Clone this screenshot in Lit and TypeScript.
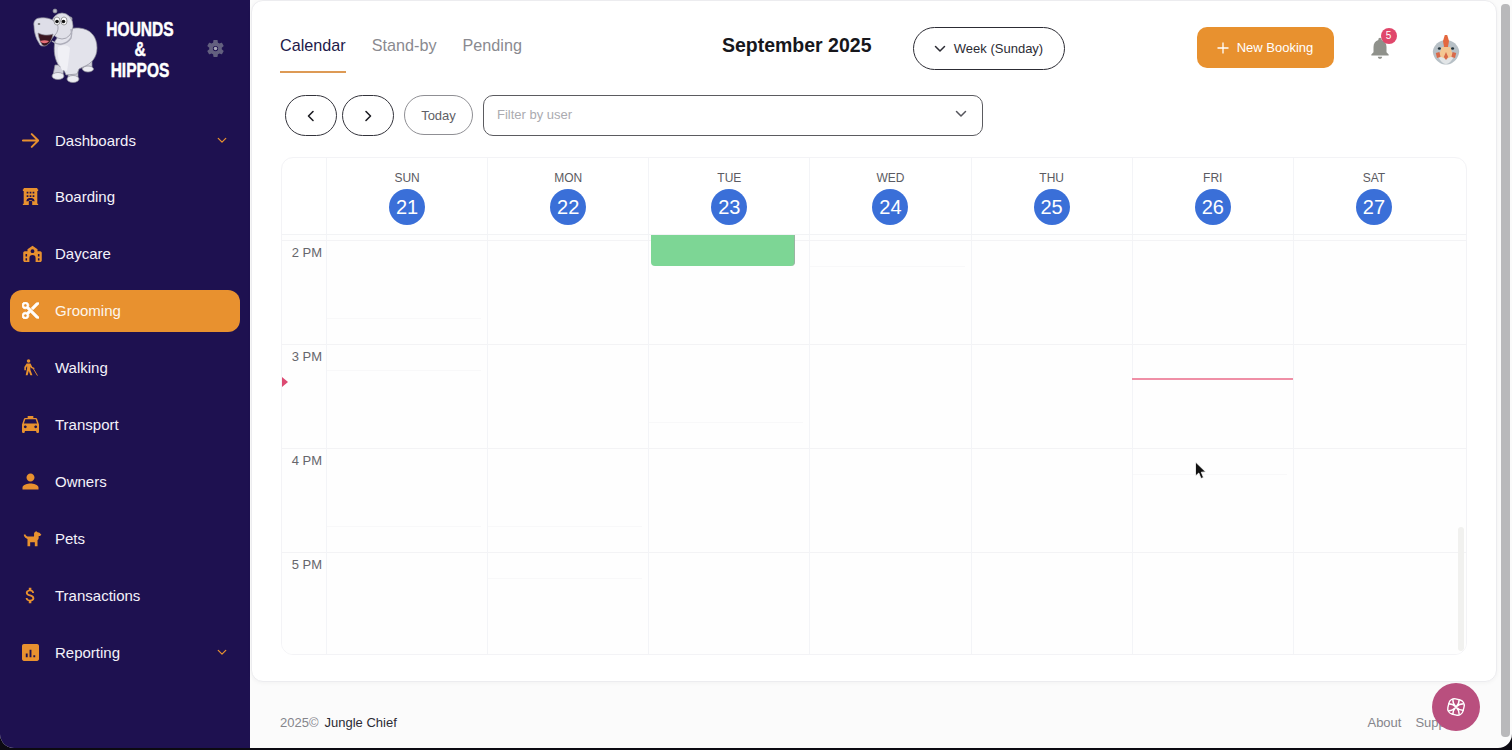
import { LitElement, html, css } from "lit";
import { customElement } from "lit/decorators.js";

const icons: Record<string, unknown> = {
  arrow: html`<svg class="ic" viewBox="2 3 20 18" fill="none" stroke="currentColor" stroke-width="2.300" stroke-linecap="round" stroke-linejoin="round"><path d="M3 12h18M13.500 4.500 21 12l-7.500 7.500"/></svg>`,
  hotel: html`<svg class="ic" viewBox="3 2 18 20" fill="currentColor"><path fill-rule="evenodd" d="M4 2h16v1.500h1v2h-1v15h1V22h-7v-3.500c0-1-.8-1.500-1-1.500h-2c-.2 0-1 .5-1 1.500V22H3v-1.500h1v-15H3v-2h1V2zm3.500 4.500v2h2v-2h-2zm3.500 0v2h2v-2h-2zm3.500 0v2h2v-2h-2zm-7 4v2h2v-2h-2zm3.500 0v2h2v-2h-2zm3.500 0v2h2v-2h-2zM8 15c1-1.800 7-1.800 8 0l1 2.500h-2.500c-1-1.800-4-1.800-5 0H7L8 15z"/></svg>`,
  school: html`<svg class="ic wide" viewBox="0 0 24 22" fill="currentColor"><path fill-rule="evenodd" d="M12 1l6.500 4.500V8H22c1 0 2 1 2 2v10c0 1-1 2-2 2h-6v-5a4 4 0 0 0-8 0v5H2c-1 0-2-1-2-2V10c0-1 1-2 2-2h3.500V5.500L12 1zm0 4.500a2.500 2.500 0 1 0 0 5 2.500 2.500 0 0 0 0-5zM3 11.500V15h2v-3.500H3zm16 0V15h2v-3.500h-2zM3 17v3h2v-3H3zm16 0v3h2v-3h-2z"/></svg>`,
  cut: html`<svg class="ic" viewBox="2 2 20 20" fill="currentColor" stroke="currentColor" stroke-width="1"><path d="M9.640 7.640c.23-.5.36-1.050.36-1.640 0-2.210-1.790-4-4-4S2 3.790 2 6s1.790 4 4 4c.59 0 1.140-.13 1.640-.36L10 12l-2.360 2.360C7.140 14.130 6.590 14 6 14c-2.210 0-4 1.790-4 4s1.790 4 4 4 4-1.790 4-4c0-.59-.13-1.140-.36-1.640L12 14l7 7h3v-1L9.640 7.640zM6 8c-1.100 0-2-.89-2-2s.9-2 2-2 2 .89 2 2-.9 2-2 2zm0 12c-1.100 0-2-.89-2-2s.9-2 2-2 2 .89 2 2-.9 2-2 2zM19 3l-6 6 2 2 7-7V3z"/></svg>`,
  walk: html`<svg class="ic" viewBox="3 1 19 22" fill="currentColor"><circle cx="10" cy="3.500" r="2.300"/><path d="M7.500 6.800h5l2.300 4.500 3 1.200-.7 1.700-3.800-1.500-1-1.800V15l2.700 7h-2.600l-2.200-5.500L8.800 22H6.300l1.800-9v-3L6.600 12.500v3H4.500v-4l3-4.700z"/><path d="M16.200 13.500 21.500 22.500" stroke="currentColor" stroke-width="1.200" fill="none"/></svg>`,
  taxi: html`<svg class="ic" viewBox="3 3 18 18" fill="currentColor"><path d="M18.920 6.010C18.720 5.420 18.160 5 17.500 5H15V3H9v2H6.500c-.66 0-1.210.42-1.420 1.010L3 12v8c0 .55.45 1 1 1h1c.55 0 1-.45 1-1v-1h12v1c0 .55.45 1 1 1h1c.55 0 1-.45 1-1v-8l-2.080-5.990zM6.500 16c-.83 0-1.500-.67-1.500-1.500S5.670 13 6.500 13s1.500.67 1.500 1.500S7.330 16 6.500 16zm11 0c-.83 0-1.500-.67-1.500-1.500s.67-1.500 1.500-1.500 1.500.67 1.500 1.500-.67 1.500-1.500 1.500zM5 11l1.500-4.500h11L19 11H5z"/></svg>`,
  person: html`<svg class="ic" viewBox="4 3.500 16 17" fill="currentColor"><path d="M12 12c2.210 0 4-1.790 4-4s-1.790-4-4-4-4 1.790-4 4 1.790 4 4 4zm0 2c-2.670 0-8 1.340-8 4v2h16v-2c0-2.660-5.330-4-8-4z"/></svg>`,
  dog: html`<svg class="ic wide" viewBox="0 0 24 22" fill="currentColor"><path d="M14 4.500c.5-1.800 1.800-3 3-3l1.500 1.300 2.500.7 2.500 2.500-1.800 1.800H20v2.200c0 1.500-.6 2.500-1.500 3.300V21H15v-5H9v5H5.500v-9.500C3 11 1.300 9 .6 6.200l2-.7C3.300 7.500 5 8.500 7 8.500h7V4.500z"/></svg>`,
  dollar: html`<svg class="ic" viewBox="4.500 2 15 20" fill="currentColor"><path d="M11.800 10.900c-2.270-.59-3-1.200-3-2.150 0-1.090 1.010-1.850 2.700-1.850 1.780 0 2.440.85 2.500 2.100h2.210c-.07-1.720-1.120-3.300-3.210-3.810V3h-3v2.160c-1.940.42-3.500 1.680-3.500 3.610 0 2.310 1.910 3.460 4.700 4.130 2.500.6 3 1.480 3 2.410 0 .69-.49 1.790-2.700 1.790-2.060 0-2.870-.92-2.980-2.100h-2.200c.12 2.190 1.760 3.420 3.680 3.830V21h3v-2.150c1.950-.37 3.500-1.500 3.500-3.550 0-2.840-2.430-3.810-4.700-4.400z"/></svg>`,
  chart: html`<svg class="ic" viewBox="3 3 18 18" fill="currentColor"><path d="M19 3H5c-1.100 0-2 .9-2 2v14c0 1.100.9 2 2 2h14c1.100 0 2-.9 2-2V5c0-1.100-.9-2-2-2zM9 17H7v-4h2v4zm4 0h-2V9h2v8zm4 0h-2v-2h2v2z"/></svg>`,
};

const chevron = (cls: string) =>
  html`<svg class=${cls} viewBox="0 0 12 8" fill="none" stroke="currentColor" stroke-width="1.500" stroke-linecap="round" stroke-linejoin="round"><path d="M1.500 1.500 6 6l4.500-4.500"/></svg>`;

const nav = [
  { label: "Dashboards", icon: "arrow", more: true },
  { label: "Boarding", icon: "hotel" },
  { label: "Daycare", icon: "school" },
  { label: "Grooming", icon: "cut", active: true },
  { label: "Walking", icon: "walk" },
  { label: "Transport", icon: "taxi" },
  { label: "Owners", icon: "person" },
  { label: "Pets", icon: "dog" },
  { label: "Transactions", icon: "dollar" },
  { label: "Reporting", icon: "chart", more: true },
];

const days = [
  ["SUN", 21],
  ["MON", 22],
  ["TUE", 23],
  ["WED", 24],
  ["THU", 25],
  ["FRI", 26],
  ["SAT", 27],
];
const hours = ["2 PM", "3 PM", "4 PM", "5 PM"];
// day:hour:slot combinations where a faint slot rule shows in the frame
const lined = new Set(["3:0:0", "0:0:2", "0:1:0", "2:1:2", "5:2:0", "0:2:2", "1:2:2", "1:3:0"]);

@customElement("app-root")
export class AppRoot extends LitElement {
  static styles = css`
    :host {
      display: block;
      height: 750px;
      overflow: hidden;
      background: #0c0a12;
      font-family: "Liberation Sans", Arial, sans-serif;
      position: relative;
    }
    .shell {
      display: flex;
      height: 748px;
      border-radius: 0 0 14px 14px;
      overflow: hidden;
      background: #fbfbfb;
    }
    aside {
      width: 250px;
      flex: none;
      background: #1e1150;
      color: #f4f2fa;
    }
    .brand {
      height: 119px;
      box-sizing: border-box;
      padding: 5px 0 0 25px;
      display: flex;
      align-items: flex-start;
    }
    .hippo {
      width: 80px;
      height: 80px;
      flex: none;
    }
    .wordmark {
      width: 70px;
      margin-top: 14px;
      text-align: center;
      color: #fff;
      font-size: 21px;
      font-weight: 700;
      line-height: 20.300px;
      transform: scaleX(0.74);
      white-space: nowrap;
      display: flex;
      flex-direction: column;
      align-items: center;
      -webkit-text-stroke: 0.500px #fff;
    }
    .gear {
      width: 21px;
      height: 21px;
      margin: 33px 0 0 30px;
      color: #63607f;
      flex: none;
    }
    .navlist {
      display: flex;
      flex-direction: column;
      gap: 14.900px;
      padding: 0 10px;
    }
    .item {
      display: flex;
      align-items: center;
      height: 42px;
      border-radius: 12px;
      padding: 0 12px;
      font-size: 15px;
    }
    .item.active {
      background: #e8912f;
      color: #fdf6ec;
    }
    .slot {
      width: 18px;
      display: flex;
      justify-content: flex-start;
      color: #e8912f;
      margin-right: 15px;
    }
    .item.active .slot {
      color: #fff;
    }
    .ic {
      width: 17px;
      height: 17px;
      flex: none;
      display: block;
    }
    .ic.wide {
      width: 21px;
    }
    .more {
      width: 10px;
      height: 7px;
      margin-left: auto;
      margin-right: 1px;
      color: #e8912f;
    }
    main {
      flex: 1;
      min-width: 0;
      display: flex;
      flex-direction: column;
      margin-left: 1px;
    }
    .card {
      height: 682px;
      box-sizing: border-box;
      background: #fff;
      border: 1px solid #ececef;
      border-radius: 12px;
      box-shadow: 0 1px 4px rgba(0, 0, 0, 0.04);
      padding: 0 29px 0 28px;
    }
    .top {
      display: flex;
      align-items: flex-start;
      height: 72px;
    }
    .tabs {
      display: flex;
      gap: 26px;
    }
    .tab {
      height: 72px;
      box-sizing: border-box;
      padding-top: 34px;
      line-height: 20px;
      font-size: 16.200px;
      color: #8a8a90;
    }
    .tab.on {
      color: #1e1a4a;
      border-bottom: 2px solid #dd9a55;
    }
    h1 {
      margin: 33px 0 0 200px;
      font-size: 19.500px;
      line-height: 23px;
      color: #17171c;
      font-weight: 700;
    }
    .week {
      margin: 26px 0 0 41px;
      width: 152px;
      height: 43px;
      box-sizing: border-box;
      border: 1.300px solid #2c2c34;
      border-radius: 22px;
      display: flex;
      align-items: center;
      justify-content: center;
      gap: 8px;
      font-size: 13px;
      color: #2c2c34;
    }
    .week svg {
      width: 12px;
      height: 8px;
    }
    .book {
      margin: 26px 0 0 132px;
      width: 137px;
      height: 41px;
      box-sizing: border-box;
      border-radius: 10px;
      background: #e8912f;
      color: #fff;
      font-size: 13px;
      display: flex;
      align-items: center;
      justify-content: center;
      gap: 8px;
    }
    .book svg {
      width: 12px;
      height: 12px;
    }
    .bell {
      position: relative;
      margin: 34px 0 0 33px;
      width: 24px;
      height: 26px;
      color: #8f918b;
      flex: none;
    }
    .bell svg {
      width: 26px;
      height: 26px;
      display: block;
    }
    .badge {
      position: absolute;
      top: -7px;
      right: -6px;
      width: 16px;
      height: 16px;
      border-radius: 50%;
      background: #e0476b;
      color: #fff;
      font-size: 10px;
      line-height: 16px;
      text-align: center;
    }
    .avatar {
      width: 36px;
      height: 32px;
      margin: 33px 0 0 37px;
      flex: none;
    }
    .tools {
      display: flex;
      align-items: flex-start;
      margin: 22px 0 0 5px;
      height: 41px;
    }
    .round {
      width: 52px;
      height: 41px;
      box-sizing: border-box;
      border: 1.300px solid #33333b;
      border-radius: 21px;
      display: flex;
      align-items: center;
      justify-content: center;
      margin-right: 5px;
      color: #1e1e24;
    }
    .round svg {
      width: 8px;
      height: 12px;
    }
    .today {
      margin: 0 10px 0 5px;
      width: 69px;
      height: 40px;
      box-sizing: border-box;
      border: 1px solid #8f8f94;
      border-radius: 20px;
      font-size: 13px;
      color: #5f5f66;
      display: flex;
      align-items: center;
      justify-content: center;
    }
    .filter {
      width: 500px;
      height: 41px;
      box-sizing: border-box;
      border: 1.500px solid #5b5b60;
      border-radius: 10px;
      padding: 0 15px 3px 13px;
      display: flex;
      align-items: center;
      justify-content: space-between;
      font-size: 13px;
      color: #ababb0;
    }
    .filter svg {
      width: 12px;
      height: 8px;
      color: #55555c;
    }
    .cal {
      margin: 21px 0 0 1px;
      width: 1186px;
      height: 498px;
      box-sizing: border-box;
      border: 1px solid #f3f3f6;
      border-radius: 12px;
      overflow: hidden;
      display: flex;
      flex-direction: column;
      background: #fff;
    }
    .cols {
      display: grid;
      grid-template-columns: 44px repeat(7, 1fr);
      padding-right: 12px;
    }
    .head {
      height: 77px;
      flex: none;
      box-sizing: border-box;
      border-bottom: 1px solid #f2f3f5;
    }
    .dh {
      border-left: 1px solid #f3f4f7;
      padding-top: 13px;
      display: flex;
      flex-direction: column;
      align-items: center;
      gap: 4px;
      font-size: 12px;
      line-height: 14px;
      color: #5b5b62;
    }
    .num {
      width: 36px;
      height: 36px;
      border-radius: 50%;
      background: #3a6fd8;
      color: #fff;
      font-size: 20px;
      line-height: 36px;
      text-align: center;
    }
    .body {
      position: relative;
      flex: 1;
      overflow: hidden;
      background: #fefefe;
    }
    .stub {
      height: 5px;
    }
    .stub > div {
      border-left: 1px solid #f3f4f7;
    }
    .stub > div:first-child {
      border-left: none;
    }
    .hour {
      height: 104px;
      border-top: 1px solid #f3f3f5;
      box-sizing: border-box;
    }
    .time {
      font-size: 13px;
      line-height: 15px;
      color: #66666c;
      text-align: right;
      padding: 4px 4px 0 0;
      box-sizing: border-box;
      position: relative;
      height: 100%;
    }
    .daycell {
      border-left: 1px solid #f3f4f7;
      display: grid;
      grid-template-rows: repeat(4, 26px);
    }
    .rule {
      margin-right: 6px;
      border-bottom: 1px solid transparent;
    }
    .rule.show {
      border-bottom-color: #f8f8f9;
    }
    .event {
      position: absolute;
      left: 369px;
      top: 0;
      width: 144px;
      height: 31px;
      background: #7dd695;
      border-radius: 0 0 4px 4px;
      border-right: 1px solid #9ab5a2;
      box-sizing: border-box;
    }
    .nowline {
      position: absolute;
      left: 850px;
      top: 143px;
      width: 161px;
      height: 2px;
      background: #ef8fa6;
    }
    .nowmark {
      position: absolute;
      left: 0;
      top: 142px;
      width: 0;
      height: 0;
      border-left: 6px solid #dc4a72;
      border-top: 5px solid transparent;
      border-bottom: 5px solid transparent;
    }
    .vbar {
      position: absolute;
      right: 2px;
      top: 292px;
      bottom: 3px;
      width: 6px;
      border-radius: 3px;
      background: #f1f1ef;
    }
    footer {
      flex: 1;
      display: flex;
      justify-content: space-between;
      align-items: flex-start;
      padding: 33px 36px 0 29px;
      font-size: 13px;
      line-height: 15px;
      color: #85858b;
    }
    footer b {
      font-weight: 400;
      color: #2c2c34;
      margin-left: 6px;
    }
    .links {
      display: flex;
      gap: 14px;
    }
    .gutter {
      width: 15px;
      flex: none;
      padding: 4px 2px 11px 4px;
      box-sizing: border-box;
    }
    .gutter div {
      height: 100%;
      background: #b9b9bb;
      border-radius: 4px;
    }
    .fab {
      position: absolute;
      left: 1432px;
      top: 683px;
      width: 48px;
      height: 48px;
      border-radius: 50%;
      background: #b94f7e;
      display: flex;
      align-items: center;
      justify-content: center;
    }
    .fab svg {
      width: 22px;
      height: 22px;
    }
    .cursor {
      position: absolute;
      left: 1194px;
      top: 461px;
      width: 13px;
      height: 20px;
    }
  `;

  render() {
    return html`
      <div class="shell">
        <aside>
          <div class="brand">
            <svg class="hippo" viewBox="0 0 80 80">
              <g stroke="#8d8d98" stroke-width="0.700">
                <path fill="#d3d3dd" d="M58 55l-1 9h10l0-10zM44 60l-1 12h10l0-12zM30 60l-2 10h10l1-10z" />
                <ellipse cx="33" cy="71" rx="6" ry="3.500" fill="#ececf2" />
                <ellipse cx="48" cy="74" rx="6" ry="3.500" fill="#ececf2" />
                <ellipse cx="63" cy="64" rx="5.500" ry="3" fill="#ececf2" />
                <path fill="#e3e3eb" d="M30 36c5-8 14-14 24-13 12 1 18 9 18 20 0 10-6 16-14 19l-4 2-2 5-11 1-3-7-4-2c-4-6-6-15-4-25z" />
                <path fill="#f0f0f5" d="M33 42c5-3 10-2 12 1-1 9-2 18-3 23l-5-1c-3-6-5-14-4-23z" stroke="none" />
                <circle cx="30" cy="6" r="2" fill="#b9b9c4" />
                <circle cx="45" cy="14" r="2.200" fill="#b9b9c4" />
                <ellipse cx="37" cy="21" rx="11" ry="13" fill="#e0e0e8" />
                <path fill="#dedee8" d="M9 21c-1-5 2-8 6-8 7-1 13 1 17 6 2 3 1 8-2 11l-7 8c-3 4-8 4-9 0-3-4-5-11-5-17z" />
                <path fill="#3a1620" d="M13 28c4 2 10 3 15 1-1 7-5 12-9 12-3-1-5-7-6-13z" />
                <path fill="#e76f78" stroke="none" d="M15 36c3-1 6-1 9 0-2 3-7 3-9 0z" />
                <path fill="none" stroke="#aeaeba" stroke-width="1.500" d="M27 36c6 5 14 4 19-3 1-3 1-6 0-9" />
              </g>
              <ellipse cx="32" cy="16" rx="3" ry="4" fill="#fff" stroke="#444" stroke-width="0.500" />
              <ellipse cx="39" cy="16" rx="3" ry="4" fill="#fff" stroke="#444" stroke-width="0.500" />
              <circle cx="32" cy="16.500" r="1.800" fill="#111" />
              <circle cx="38.500" cy="16.500" r="1.800" fill="#111" />
              <ellipse cx="14" cy="19" rx="1.300" ry="1" fill="#777" />
            </svg>
            <div class="wordmark"><span>HOUNDS</span><span>&amp;</span><span>HIPPOS</span></div>
            <svg class="gear" viewBox="0 0 24 24" fill="currentColor"><path d="M19.140 12.940c.04-.3.060-.61.060-.94 0-.32-.02-.64-.07-.94l2.030-1.580c.18-.14.230-.41.120-.61l-1.920-3.320c-.12-.22-.37-.29-.59-.22l-2.390.96c-.5-.38-1.030-.7-1.620-.94l-.36-2.540c-.04-.24-.24-.41-.48-.41h-3.840c-.24 0-.43.170-.47.410l-.36 2.540c-.59.240-1.130.570-1.620.940l-2.390-.96c-.22-.08-.47 0-.59.220L2.740 8.870c-.12.210-.08.470.120.610l2.030 1.580c-.05.300-.09.630-.09.940s.02.640.07.940l-2.030 1.580c-.18.140-.23.410-.12.610l1.920 3.320c.12.220.37.290.59.220l2.390-.96c.5.380 1.030.700 1.620.940l.36 2.540c.05.240.24.410.48.410h3.840c.24 0 .44-.17.470-.41l.36-2.540c.59-.24 1.130-.56 1.620-.94l2.390.96c.22.080.47 0 .59-.22l1.920-3.320c.12-.22.070-.47-.12-.61l-2.010-1.580zM12 15a3 3 0 1 1 0-6 3 3 0 0 1 0 6z"/><circle cx="12" cy="12" r="2" fill="#a9a8b8"/></svg>
          </div>
          <nav class="navlist">
            ${nav.map(
              (n) => html`<div class="item ${n.active ? "active" : ""}">
                <span class="slot">${icons[n.icon]}</span>
                <span>${n.label}</span>
                ${n.more ? chevron("more") : ""}
              </div>`
            )}
          </nav>
        </aside>
        <main>
          <section class="card">
            <div class="top">
              <div class="tabs">
                <div class="tab on">Calendar</div>
                <div class="tab">Stand-by</div>
                <div class="tab">Pending</div>
              </div>
              <h1>September 2025</h1>
              <div class="week">${chevron("")}<span>Week (Sunday)</span></div>
              <div class="book">
                <svg viewBox="0 0 12 12" fill="none" stroke="currentColor" stroke-width="1.300"><path d="M6 .5v11M.5 6h11" /></svg>
                <span>New Booking</span>
              </div>
              <div class="bell">
                <svg viewBox="0 0 24 24" fill="currentColor"><path d="M12 22c1.100 0 2-.9 2-2h-4c0 1.100.89 2 2 2zm6-6v-5c0-3.070-1.640-5.640-4.500-6.320V4c0-.83-.67-1.500-1.500-1.500s-1.500.67-1.500 1.500v.68C7.630 5.360 6 7.920 6 11v5l-2 2v1h16v-1l-2-2z" /></svg>
                <span class="badge">5</span>
              </div>
              <svg class="avatar" viewBox="0 0 30 32" preserveAspectRatio="none">
                <path fill="#b7c0c6" d="M15 6c6 0 10 5 11 11 0 5-3 10-6 12-3 2-7 2-10 0-3-2-6-7-6-12C5 11 9 6 15 6z" />
                <path fill="#e2e5e7" d="M8 22c2 4 4 8 7 8s5-4 7-8l-4-1-3-3-3 3z" />
                <path fill="#e4683f" d="M14 1h2l1.500 6-1 7h-3l-1-7z" />
                <path fill="#f4c692" d="M11.500 13h7L21 22l-6 3-6-3z" />
                <path fill="#d8694a" d="M15 18l-1.800 5 1.800 3 1.800-3zM6.500 19l3-1 1 5-3 1zM23.500 19l-3-1-1 5 3 1z" />
                <circle cx="9.500" cy="14.500" r="1.300" fill="#23323a" />
                <circle cx="20.500" cy="14.500" r="1.300" fill="#23323a" />
              </svg>
            </div>
            <div class="tools">
              <div class="round"><svg viewBox="0 0 8 12" fill="none" stroke="currentColor" stroke-width="1.600" stroke-linecap="round" stroke-linejoin="round"><path d="M6 1.500 1.500 6 6 10.500" /></svg></div>
              <div class="round"><svg viewBox="0 0 8 12" fill="none" stroke="currentColor" stroke-width="1.600" stroke-linecap="round" stroke-linejoin="round"><path d="M2 1.500 6.500 6 2 10.500" /></svg></div>
              <div class="today">Today</div>
              <div class="filter"><span>Filter by user</span>${chevron("")}</div>
            </div>
            <div class="cal">
              <div class="cols head">
                <div></div>
                ${days.map((d) => html`<div class="dh"><span>${d[0]}</span><span class="num">${d[1]}</span></div>`)}
              </div>
              <div class="body">
                <div class="cols stub">
                  <div></div>
                  ${days.map(() => html`<div></div>`)}
                </div>
                ${hours.map(
                  (h, hi) => html`<div class="cols hour">
                    <div class="time">${h}</div>
                    ${days.map(
                      (_, di) => html`<div class="daycell">
                        ${[0, 1, 2, 3].map(
                          (s) => html`<div class="rule ${lined.has(`${di}:${hi}:${s}`) ? "show" : ""}"></div>`
                        )}
                      </div>`
                    )}
                  </div>`
                )}
                <div class="event"></div>
                <div class="nowline"></div>
                <div class="nowmark"></div>
                <div class="vbar"></div>
              </div>
            </div>
          </section>
          <footer>
            <div>2025©<b>Jungle Chief</b></div>
            <div class="links"><span>About</span><span>Support</span></div>
          </footer>
        </main>
        <div class="gutter"><div></div></div>
      </div>
      <div class="fab">
        <svg viewBox="0 0 24 24" fill="none" stroke="#fff" stroke-width="1.500" stroke-linejoin="round">
          <rect x="3.500" y="3.500" width="17" height="17" rx="6" transform="rotate(14 12 12)" />
          <path d="M8.500 3.500c0 3 1 6 3.500 8.500s5.500 4 8.500 3.500M15.500 3.500c0 3-1 6-3.500 8.500s-5 4.500-8.500 4M3.500 8.500c3 0 6 1 8.500 3.500s3.500 5.500 3.500 8.500M20.500 8.500c-3 0-6 1-8.500 3.500s-3.500 5.500-3.500 8.500" />
        </svg>
      </div>
      <svg class="cursor" viewBox="0 0 13 20">
        <path d="M1.500 1v14l3.300-3 2.200 5.500 2.500-1-2.200-5.300 4.400-.3z" fill="#111" stroke="#fff" stroke-width="0.800" />
      </svg>
    `;
  }
}
